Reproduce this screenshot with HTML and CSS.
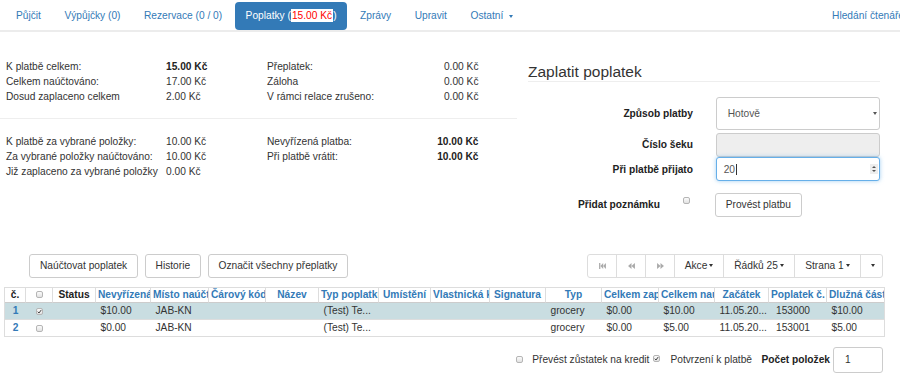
FILE: index.html
```html
<!DOCTYPE html>
<html lang="cs">
<head>
<meta charset="utf-8">
<title>Poplatky</title>
<link rel="stylesheet" href="styles.css">
</head>
<body>
<nav class="tabs">
  <a class="tab">Půjčit</a>
  <a class="tab">Výpůjčky (0)</a>
  <a class="tab">Rezervace (0 / 0)</a>
  <a class="tab active">Poplatky (<span class="due">15.00 Kč</span>)</a>
  <a class="tab">Zprávy</a>
  <a class="tab">Upravit</a>
  <a class="tab">Ostatní <span class="caret"></span></a>
  <a class="tab search">Hledání čtenáře</a>
</nav>

<div class="main">
  <section class="summary">
    <div class="sum-grid">
      <span>K platbě celkem:</span><b>15.00 Kč</b><span>Přeplatek:</span><span class="r">0.00 Kč</span>
      <span>Celkem naúčtováno:</span><span>17.00 Kč</span><span>Záloha</span><span class="r">0.00 Kč</span>
      <span>Dosud zaplaceno celkem</span><span>2.00 Kč</span><span>V rámci relace zrušeno:</span><span class="r">0.00 Kč</span>
    </div>
    <hr class="sep">
    <div class="sum-grid">
      <span>K platbě za vybrané položky:</span><span>10.00 Kč</span><span>Nevyřízená platba:</span><b class="r">10.00 Kč</b>
      <span>Za vybrané položky naúčtováno:</span><span>10.00 Kč</span><span>Při platbě vrátit:</span><b class="r">10.00 Kč</b>
      <span>Již zaplaceno za vybrané položky</span><span>0.00 Kč</span><span></span><span></span>
    </div>
  </section>

  <section class="pay">
    <h3>Zaplatit poplatek</h3>
    <div class="frow r1">
      <label>Způsob platby</label><span></span>
      <div class="select">Hotově<span class="sel-arrow"></span></div>
    </div>
    <div class="frow r2">
      <label>Číslo šeku</label><span></span>
      <div class="input disabled"></div>
    </div>
    <div class="frow r3">
      <label>Při platbě přijato</label><span></span>
      <div class="input focus">20<span class="cursor"></span><span class="spin"><i class="up"></i><i class="down"></i></span></div>
    </div>
    <div class="frow r4">
      <div class="note"><label>Přidat poznámku</label><span class="cb note-cb"></span></div><span></span>
      <div><span class="btn submit">Provést platbu</span></div>
    </div>
  </section>
</div>

<div class="toolbar">
  <span class="btn">Naúčtovat poplatek</span>
  <span class="btn">Historie</span>
  <span class="btn">Označit všechny přeplatky</span>
  <div class="pager">
    <span class="pg w-ico"><svg width="7" height="6" viewBox="0 0 8 7"><rect x="0" y="0" width="1.5" height="7" fill="#aaa"/><polygon points="1.5,3.5 4.8,0 4.8,7" fill="#aaa"/><polygon points="4.7,3.5 8,0 8,7" fill="#aaa"/></svg></span>
    <span class="pg w-ico"><svg width="7" height="6" viewBox="0 0 8 7"><polygon points="0,3.5 4,0 4,7" fill="#aaa"/><polygon points="4,3.5 8,0 8,7" fill="#aaa"/></svg></span>
    <span class="pg w-ico"><svg width="7" height="6" viewBox="0 0 8 7"><polygon points="0,0 4,3.5 0,7" fill="#aaa"/><polygon points="4,0 8,3.5 4,7" fill="#aaa"/></svg></span>
    <span class="pg w-akce">Akce <span class="caret dark"></span></span>
    <span class="pg w-rows">Řádků 25 <span class="caret dark"></span></span>
    <span class="pg w-page">Strana 1 <span class="caret dark"></span></span>
    <span class="pg w-last"><span class="caret dark"></span></span>
  </div>
</div>

<table class="grid">
  <colgroup>
    <col style="width:21px"><col style="width:27px"><col style="width:43px"><col style="width:55px">
    <col style="width:58px"><col style="width:57px"><col style="width:53px"><col style="width:60px">
    <col style="width:52px"><col style="width:59px"><col style="width:56px"><col style="width:56px">
    <col style="width:57px"><col style="width:56px"><col style="width:54px"><col style="width:58px">
    <col style="width:57px">
  </colgroup>
  <thead>
    <tr>
      <th class="plain">č.</th><th><span class="cb"></span></th><th class="plain">Status</th>
      <th>Nevyřízená</th><th>Místo naúčtování</th><th>Čárový kód</th><th>Název</th><th>Typ poplatku</th>
      <th>Umístění</th><th>Vlastnická knihovna</th><th>Signatura</th><th>Typ</th><th>Celkem zaplaceno</th>
      <th>Celkem naúčtováno</th><th>Začátek</th><th>Poplatek č.</th><th>Dlužná částka</th>
    </tr>
  </thead>
  <tbody>
    <tr class="sel">
      <td class="num">1</td><td class="c"><span class="cb"><svg width="5" height="5" viewBox="0 0 7 7"><path d="M1 3.8 L2.8 5.6 L6 1.3" stroke="#444" stroke-width="1.4" fill="none"/></svg></span></td><td></td>
      <td>$10.00</td><td>JAB-KN</td><td></td><td></td><td>(Test) Te...</td><td></td><td></td><td></td>
      <td>grocery</td><td>$0.00</td><td>$10.00</td><td>11.05.20...</td><td class="id">153000</td><td>$10.00</td>
    </tr>
    <tr>
      <td class="num">2</td><td class="c"><span class="cb"></span></td><td></td>
      <td>$0.00</td><td>JAB-KN</td><td></td><td></td><td>(Test) Te...</td><td></td><td></td><td></td>
      <td>grocery</td><td>$0.00</td><td>$5.00</td><td>11.05.20...</td><td class="id">153001</td><td>$5.00</td>
    </tr>
  </tbody>
</table>

<div class="bottom">
  <span class="cb b-cb1"></span><span class="b-t1">Převést zůstatek na kredit</span>
  <span class="cb b-cb2"><svg width="5" height="5" viewBox="0 0 7 7"><path d="M1 3.8 L2.8 5.6 L6 1.3" stroke="#444" stroke-width="1.4" fill="none"/></svg></span><span class="b-t2">Potvrzení k platbě</span>
  <b class="b-t3">Počet položek</b>
  <span class="input count">1</span>
</div>
</body>
</html>
```

FILE: styles.css
```css
* { box-sizing: border-box; }

body {
  margin: 0;
  width: 900px;
  height: 384px;
  overflow: hidden;
  background: #fff;
  color: #333;
  font-family: "Liberation Sans", Arial, sans-serif;
  font-size: 10.2px;
}

/* ---------- tabs ---------- */
.tabs {
  display: flex;
  width: 917px;
  height: 32px;
  padding: 2px 0 0 5.5px;
  border-bottom: 2px solid #ececec;
}
.tab {
  padding: 0 10.5px;
  margin-right: 2.5px;
  height: 28px;
  line-height: 28px;
  color: #337ab7;
  border-radius: 4px;
  white-space: nowrap;
}
.tab.active {
  background: #337ab7;
  color: #fff;
}
.due {
  background: #fff;
  color: #f00;
  padding: 1px 1px;
}
.search { margin-left: auto; }

.caret {
  display: inline-block;
  width: 0;
  height: 0;
  border-top: 3px solid #337ab7;
  border-left: 2.5px solid transparent;
  border-right: 2.5px solid transparent;
  vertical-align: middle;
  margin-left: 3px;
}
.caret.dark { border-top-color: #333; margin-left: 2px; }

/* ---------- main ---------- */
.main { display: flex; }

.summary {
  width: 517px;
  padding-top: 26.5px;
}
.sum-grid {
  display: grid;
  grid-template-columns: 160px 101px 1fr auto;
  width: 472.5px;
  margin-left: 6px;
  line-height: 15px;
  white-space: nowrap;
}
.sum-grid b { color: #222; }
.r { text-align: right; }
.sep {
  border: 0;
  border-top: 1px solid #eee;
  height: 0;
  margin: 14.5px 0;
}

.pay {
  width: 383px;
  padding-left: 11px;
  padding-top: 30.8px;
}
.pay h3 {
  margin: 0;
  width: 352px;
  font-weight: normal;
  font-size: 15.5px;
  line-height: 17px;
  padding-bottom: 1.2px;
  border-bottom: 1px solid #eee;
  color: #333;
}

.frow {
  display: grid;
  grid-template-columns: 165px 23px 164px;
  align-items: center;
}
.frow label {
  font-weight: bold;
  color: #222;
  text-align: right;
  white-space: nowrap;
}
.r1 { margin-top: 15px; height: 33px; }
.r2 { margin-top: 3px; height: 24px; }
.r3 { height: 24px; }
.r4 { margin-top: 12px; height: 24px; }

.select {
  height: 33px;
  border: 1px solid #ccc;
  border-radius: 3px;
  display: flex;
  align-items: center;
  justify-content: space-between;
  padding: 0 2.5px 0 10.7px;
  color: #555;
}
.sel-arrow {
  width: 0;
  height: 0;
  border-top: 3px solid #555;
  border-left: 2px solid transparent;
  border-right: 2px solid transparent;
}

.input {
  height: 24px;
  border: 1px solid #ccc;
  border-radius: 3px;
  display: flex;
  align-items: center;
  color: #555;
  background: #fff;
}
.input.disabled { background: #eee; }
.input.focus {
  border-color: #66afe9;
  box-shadow: 0 0 4px rgba(102, 175, 233, 0.6);
  padding-left: 6.7px;
  height: 24.5px;
}
.cursor {
  display: inline-block;
  width: 1px;
  height: 11px;
  background: #333;
  margin-left: 1px;
}
.spin {
  margin-left: auto;
  margin-right: 1.5px;
  width: 8px;
  height: 10px;
  background: #eee;
  display: flex;
  flex-direction: column;
  align-items: center;
  justify-content: center;
  gap: 1.5px;
}
.spin i {
  width: 0;
  height: 0;
  border-left: 2px solid transparent;
  border-right: 2px solid transparent;
}
.spin .up { border-bottom: 2.5px solid #555; }
.spin .down { border-top: 2.5px solid #555; }

.note {
  display: flex;
  justify-content: flex-end;
  align-self: stretch;
  align-items: center;
}
.note-cb {
  align-self: flex-start;
  margin: 4px 3px 0 23px;
}
.submit { margin-left: -1px; }

/* ---------- checkbox ---------- */
.cb {
  display: inline-flex;
  align-items: center;
  justify-content: center;
  width: 7px;
  height: 7px;
  border: 1px solid #b5b5b5;
  border-radius: 2px;
  background: linear-gradient(#fbfbfb, #e2e2e2);
  vertical-align: middle;
}

/* ---------- buttons / toolbar ---------- */
.btn {
  display: inline-flex;
  align-items: center;
  height: 24px;
  padding: 0 9.7px;
  border: 1px solid #ccc;
  border-radius: 3px;
  background: #fff;
  color: #333;
  white-space: nowrap;
}
.toolbar {
  display: flex;
  align-items: center;
  gap: 7px;
  margin-top: 37px;
  padding-left: 29.3px;
  padding-right: 17px;
  height: 24px;
}
.pager {
  margin-left: auto;
  display: flex;
  height: 24px;
  border: 1px solid #ddd;
  border-radius: 3px;
}
.pg {
  display: flex;
  align-items: center;
  justify-content: center;
  height: 100%;
  border-left: 1px solid #ddd;
  white-space: nowrap;
}
.pg:first-child { border-left: 0; }
.w-ico { width: 28px; }
.pg.w-ico + .pg.w-ico { width: 29px; }
.w-akce { width: 49px; }
.w-rows { width: 71px; }
.w-page { width: 66px; }
.w-last { width: 22px; }

/* ---------- table ---------- */
.grid {
  margin: 9px 0 0 4px;
  width: 879px;
  table-layout: fixed;
  border-collapse: separate;
  border-spacing: 0;
  border: 1px solid #ddd;
  border-bottom: 0;
}
.grid th {
  padding: 0 2px;
  line-height: 14px;
  font-weight: bold;
  color: #337ab7;
  text-align: center;
  white-space: nowrap;
  overflow: hidden;
  border-right: 1px solid #ddd;
  border-bottom: 1px solid #ccc;
}
.grid th:last-child { border-right: 0; }
.grid th.plain { color: #222; }
.grid th .cb { margin-top: -2px; }
.grid td {
  padding: 0 4.5px;
  line-height: 16px;
  white-space: nowrap;
  overflow: hidden;
  border-bottom: 1px solid #ddd;
  color: #333;
}
.grid tr.sel td { background: #c9dde1; }
.grid td.num {
  text-align: center;
  font-weight: bold;
  color: #337ab7;
  padding: 0;
}
.grid td.c { text-align: center; padding: 0; }
.grid td.id { padding-left: 7px; }

/* ---------- bottom ---------- */
.bottom {
  display: flex;
  align-items: center;
  justify-content: flex-end;
  margin-top: 10px;
  padding-right: 17px;
  height: 26px;
  white-space: nowrap;
}
.b-cb1 { margin-right: 9px; }
.b-t1 { margin-right: 3.5px; }
.b-cb2 { margin-right: 10.5px; margin-top: -3px; }
.b-t2 { margin-right: 9.5px; }
.b-t3 { margin-right: 3px; color: #222; }
.count {
  width: 50px;
  height: 26px;
  padding-left: 11px;
  color: #333;
}
```
